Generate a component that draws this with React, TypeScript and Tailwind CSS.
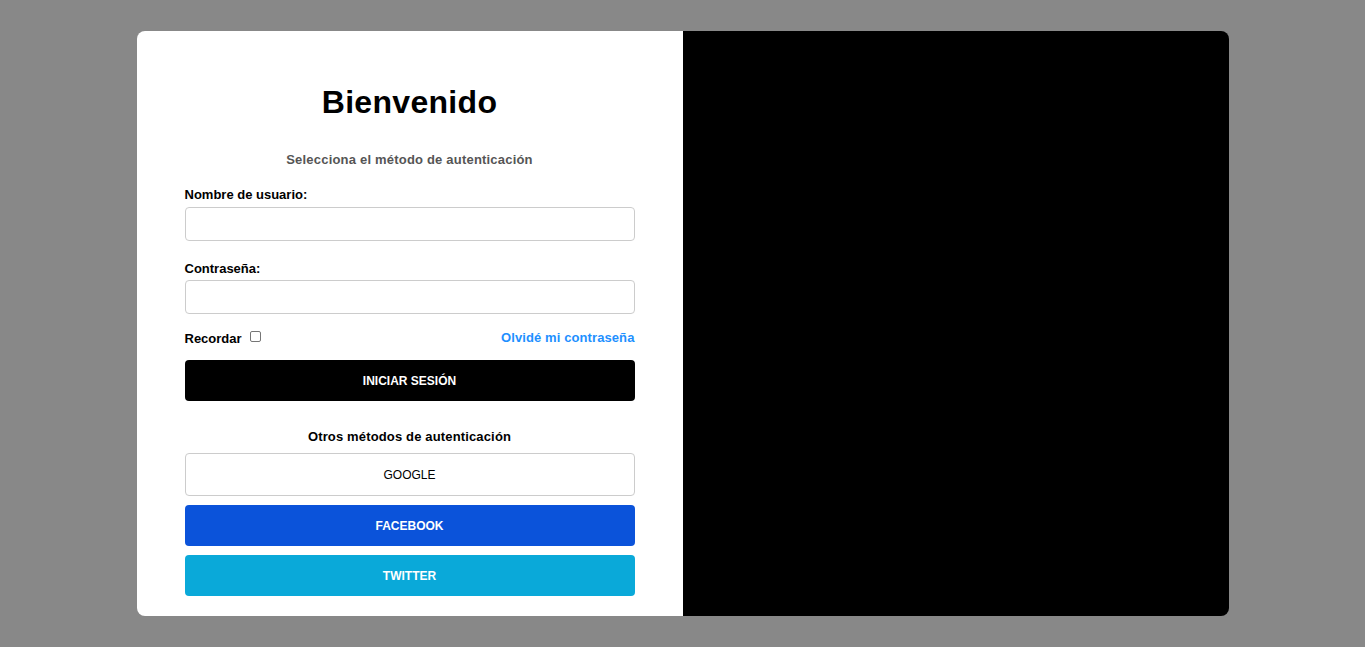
export default function App() {
  return (
    <div
      className="min-h-screen bg-[#888888] flex justify-center pt-[31px]"
      style={{ fontFamily: '"Liberation Sans", Arial, sans-serif' }}
    >
      <div className="flex w-[1092px] h-[585px] rounded-lg overflow-hidden">
        {/* formulario */}
        <div className="w-[546px] bg-white px-[48px] pt-[53px]">
          <h1 className="text-[32px] leading-[37px] font-bold text-center text-black tracking-[0.3px]">Bienvenido</h1>
          <p className="mt-[31px] text-[13px] leading-[15px] font-bold text-center text-[#555555] tracking-[0.2px]">
            Selecciona el método de autenticación
          </p>

          <label className="block mt-[20px] text-[13px] leading-[15px] font-bold text-black">Nombre de usuario:</label>
          <input type="text" className="block mt-[5px] w-full h-[34px] border border-[#cccccc] rounded" />

          <label className="block mt-[20px] text-[13px] leading-[15px] font-bold text-black">Contraseña:</label>
          <input type="password" className="block mt-[4px] w-full h-[34px] border border-[#cccccc] rounded" />

          <div className="flex items-center justify-between mt-[17px] h-[15px]">
            <label className="flex items-center text-[13px] font-bold text-black">
              Recordar
              <span className="ml-[8px] inline-block w-[11px] h-[11px] border border-[#767676] rounded-[2px] -mt-[4px]" />
            </label>
            <a className="text-[13px] font-bold text-[#1e90ff] -mt-[2px] tracking-[0.1px]">Olvidé mi contraseña</a>
          </div>

          <button className="block mt-[14px] w-full h-[41px] bg-black text-white rounded text-[12px] font-bold">
            INICIAR SESIÓN
          </button>

          <p className="mt-[28px] text-[13px] leading-[15px] font-bold text-center text-black tracking-[0.15px]">
            Otros métodos de autenticación
          </p>

          <div className="flex flex-col gap-[9px] mt-[9px]">
            <button className="w-full h-[43px] bg-white border border-[#cccccc] rounded text-[12px] text-black">
              GOOGLE
            </button>
            <button className="w-full h-[41px] bg-[#0b53da] text-white rounded text-[12px] font-bold">
              FACEBOOK
            </button>
            <button className="w-full h-[41px] bg-[#0aa9d9] text-white rounded text-[12px] font-bold">
              TWITTER
            </button>
          </div>
        </div>

        {/* panel derecho */}
        <div className="w-[546px] bg-black" />
      </div>
    </div>
  )
}
